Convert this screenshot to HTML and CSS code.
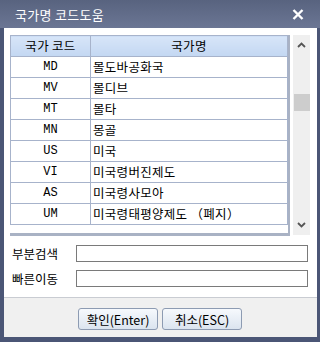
FILE: index.html
```html
<!DOCTYPE html>
<html>
<head>
<meta charset="utf-8">
<link rel="stylesheet" href="styles.css">
</head>
<body>
<div class="window">
  <div class="titlebar">
    <span class="title">국가명 코드도움</span>
    <svg class="close" width="12" height="11" viewBox="0 0 12 11"><path d="M1.5 1 L10.5 10 M10.5 1 L1.5 10" stroke="#fff" stroke-width="2.4" fill="none"/></svg>
  </div>
  <div class="content">
    <div class="listarea">
      <div class="tablewrap">
        <table class="grid">
          <thead>
            <tr><th class="c-code">국가 코드</th><th class="c-name">국가명</th></tr>
          </thead>
          <tbody>
            <tr><td class="code">MD</td><td class="name">몰도바공화국</td></tr>
            <tr><td class="code">MV</td><td class="name">몰디브</td></tr>
            <tr><td class="code">MT</td><td class="name">몰타</td></tr>
            <tr><td class="code">MN</td><td class="name">몽골</td></tr>
            <tr><td class="code">US</td><td class="name">미국</td></tr>
            <tr><td class="code">VI</td><td class="name">미국령버진제도</td></tr>
            <tr><td class="code">AS</td><td class="name">미국령사모아</td></tr>
            <tr><td class="code">UM</td><td class="name">미국령태평양제도 （폐지）</td></tr>
          </tbody>
        </table>
      </div>
      <div class="scrollbar">
        <svg class="arrow" width="9" height="6" viewBox="0 0 9 6"><path d="M1 5 L4.5 1.5 L8 5" stroke="#555" stroke-width="1.8" fill="none"/></svg>
        <div class="track"><div class="thumb"></div></div>
        <svg class="arrow" width="9" height="6" viewBox="0 0 9 6"><path d="M1 1 L4.5 4.5 L8 1" stroke="#555" stroke-width="1.8" fill="none"/></svg>
      </div>
    </div>
    <div class="form">
      <div class="frow"><label>부분검색</label><div class="input"></div></div>
      <div class="frow"><label>빠른이동</label><div class="input"></div></div>
    </div>
  </div>
  <div class="footer">
    <button class="btn">확인(Enter)</button>
    <button class="btn">취소(ESC)</button>
  </div>
</div>
</body>
</html>
```
FILE: styles.css
```css
html, body { margin: 0; padding: 0; }
body { width: 320px; height: 342px; overflow: hidden; font-family: "Noto Sans CJK KR", "Liberation Sans", sans-serif; }
.window {
  width: 320px; height: 342px; box-sizing: border-box;
  background: #4b5676;
  padding: 0 3px 5px 4px;
  display: flex; flex-direction: column;
}
.titlebar {
  height: 28px; flex: none;
  margin: 0 -3px 0 -4px;
  padding: 0 16px 0 15px;
  background: linear-gradient(#58637f, #6b7694);
  display: flex; align-items: center; justify-content: space-between;
}
.title { color: #fff; font-size: 13px; letter-spacing: 0.3px; line-height: 1; }
.close { display: block; margin-top: 0; }
.content {
  background: #fff; height: 269px; flex: none;
  padding: 7px 7px 0 6px; box-sizing: border-box;
}
.listarea { display: flex; gap: 3px; height: 201px; }
.tablewrap {
  width: 280px; height: 201px; box-sizing: border-box;
  border-right: 2px solid #a9b2c4; border-bottom: 3px solid #a9b2c4;
}
.grid { border-collapse: collapse; width: 278px; table-layout: fixed; }
.grid th, .grid td {
  border: 1px solid #a7b3cb; height: 21px; padding: 0; box-sizing: border-box;
  font-size: 12.5px; font-weight: normal; color: #000; line-height: 20px;
  white-space: nowrap; overflow: hidden;
}
.grid th { background: linear-gradient(#d7e5f8, #c3d7f2); text-align: center; letter-spacing: 0.3px; }
.c-code { width: 80px; }
.grid td.code { text-align: center; font-family: "Liberation Mono", monospace; font-size: 12px; }
.grid td.name { padding-left: 2px; letter-spacing: 0.3px; }
.scrollbar {
  width: 17px; height: 200px; background: #efefef;
  display: flex; flex-direction: column; align-items: center;
}
.arrow { display: block; flex: none; margin: 7px 0; }
.track { flex: 1; width: 100%; position: relative; }
.thumb { margin-top: 39px; height: 17px; background: #cdcdcd; width: 16px; margin-left: 1px; }
.form { display: flex; flex-direction: column; gap: 8px; margin-top: 9px; padding-left: 2px; }
.frow { display: flex; align-items: center; height: 17px; }
.frow label { width: 65px; font-size: 12.5px; color: #000; }
.input { width: 234px; height: 17px; box-sizing: border-box; border: 1px solid #7a7a7a; background: #fff; margin-right: 2px; }
.footer {
  flex: 1; background: #f0f0f0; border-top: 1px solid #c9ccd2;
  display: flex; justify-content: center; align-items: flex-start; gap: 4px;
  padding-top: 10px; padding-right: 1px;
}
.btn {
  width: 80px; height: 22px; box-sizing: border-box; padding: 0;
  border: 1px solid #8d9bb2; border-radius: 3px;
  background: linear-gradient(#f6f9fd, #dbe4ef);
  font-family: "Noto Sans CJK KR", "Liberation Sans", sans-serif; font-size: 12.5px; color: #000;
}
```
